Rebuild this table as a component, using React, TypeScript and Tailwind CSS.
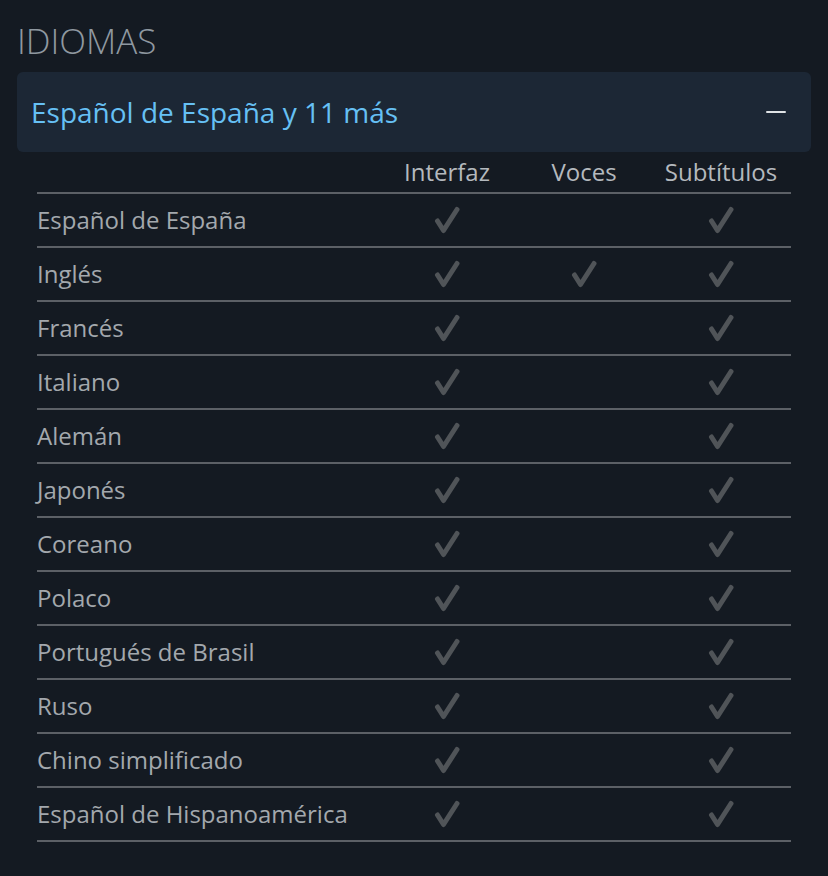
import React from "react";

const rows: [string, boolean, boolean, boolean][] = [
  ["Español de España", true, false, true],
  ["Inglés", true, true, true],
  ["Francés", true, false, true],
  ["Italiano", true, false, true],
  ["Alemán", true, false, true],
  ["Japonés", true, false, true],
  ["Coreano", true, false, true],
  ["Polaco", true, false, true],
  ["Portugués de Brasil", true, false, true],
  ["Ruso", true, false, true],
  ["Chino simplificado", true, false, true],
  ["Español de Hispanoamérica", true, false, true],
];

const Check = () => (
  <svg width="28" height="28" viewBox="0 0 28 28" className="block">
    <path
      d="M4.5 15 L10.5 24.5 L24 3.5"
      fill="none"
      stroke="#505458"
      strokeWidth="5"
      strokeLinecap="round"
      strokeLinejoin="round"
    />
  </svg>
);

const Cell = ({ on }: { on: boolean }) => (
  <div className="flex items-center justify-center">{on && <Check />}</div>
);

const App = () => {
  return (
    <div className="min-h-[876px] w-[828px] bg-[#141a22] px-[17px] pt-[20px] font-['Open_Sans',sans-serif]">
      <h2 className="text-[35px] font-light leading-[42px] text-[#8f98a0]">IDIOMAS</h2>

      <div className="mt-[10px] flex h-[80px] items-center justify-between rounded-[6px] bg-[#1c2735] pl-[14px] pr-[25px]">
        <span className="text-[28px] text-[#66c0f4]">Español de España y 11 más</span>
        <span className="block h-[2px] w-[20px] rounded bg-[#dfe3e6]"></span>
      </div>

      <div className="mx-[20px]">
        <div className="grid h-[42px] grid-cols-[1fr_140px_134px_140px] items-center border-b-2 border-[#5c6066] text-[24px] text-[#b4b9be]">
          <div></div>
          <div className="text-center">Interfaz</div>
          <div className="text-center">Voces</div>
          <div className="text-center">Subtítulos</div>
        </div>
        {rows.map(([name, ui, voice, subs]) => (
          <div
            key={name}
            className="grid h-[54px] grid-cols-[1fr_140px_134px_140px] items-center border-b-2 border-[#5c6066] text-[24px] text-[#a3a8ad]"
          >
            <div>{name}</div>
            <Cell on={ui} />
            <Cell on={voice} />
            <Cell on={subs} />
          </div>
        ))}
      </div>
    </div>
  );
};

export default App;
